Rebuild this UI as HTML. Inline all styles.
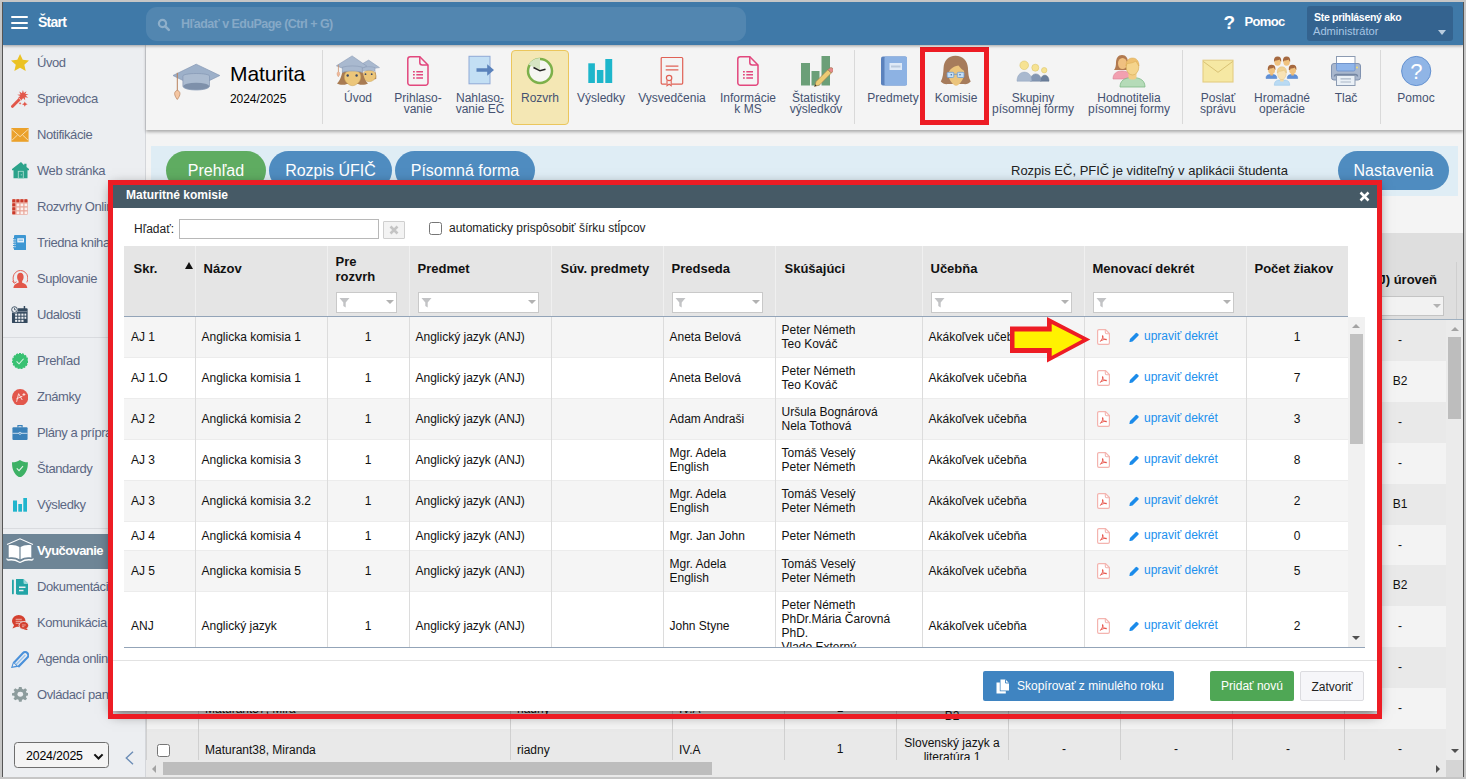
<!DOCTYPE html>
<html lang="sk">
<head>
<meta charset="utf-8">
<title>EduPage – Maturitné komisie</title>
<style>
*{box-sizing:border-box;margin:0;padding:0}
html,body{width:1466px;height:779px;overflow:hidden}
body{background:#c6c6c6;font-family:"Liberation Sans",Arial,sans-serif;font-size:12px;color:#000;position:relative}
.abs{position:absolute}
#frame{position:absolute;left:2px;top:2px;width:1462px;height:775px;border-left:1px solid #555;border-right:1px solid #555;background:#f4f4f4;overflow:hidden}
/* everything inside #frame uses page coords minus (3,2) -> use wrapper shifting */
#page{position:absolute;left:-3px;top:-2px;width:1466px;height:779px}
/* ---------- top bar ---------- */
#topbar{left:3px;top:2px;width:1460px;height:43px;background:#3f79a8;box-shadow:0 1px 3px rgba(0,0,0,.35);z-index:5}
#burger div{position:absolute;left:11px;width:17px;height:2px;background:#fff;border-radius:1px}
#start{left:38px;top:14px;color:#fff;font-size:14px;font-weight:bold;letter-spacing:-.75px;line-height:16px}
#search{left:146px;top:7px;width:600px;height:34px;border-radius:11px;background:#5286b0}
#search span{position:absolute;left:35px;top:10px;font-size:12.5px;font-weight:bold;color:#86a9c7;letter-spacing:-.53px;line-height:15px;white-space:nowrap}
#help{left:1244.500px;top:14px;color:#fff;font-size:13px;font-weight:bold;letter-spacing:-.65px}
#helpq{left:1223.500px;top:11.500px;color:#fff;font-size:19px;line-height:22px;font-weight:bold}
#user{left:1307px;top:6px;width:146px;height:35px;background:#34638f;border-radius:3px}
#user b{position:absolute;left:7px;top:4.500px;color:#fff;font-size:10.5px;letter-spacing:-.3px;white-space:nowrap}
#user span{position:absolute;left:6px;top:18.500px;color:#a8c6e4;font-size:11.100px;white-space:nowrap}
#user i{position:absolute;right:7.500px;top:24px;border:4px solid transparent;border-top:5px solid #b9cde0;border-bottom:0}
/* ---------- sidebar ---------- */
#side{left:3px;top:45px;width:143px;height:732px;background:#eceef1;border-right:1px solid #d4d6da;overflow:hidden}
.si{position:absolute;left:0;width:143px;height:36px}
.si span{position:absolute;left:34px;top:10px;font-size:13px;letter-spacing:-.43px;color:#5b6783;white-space:nowrap;line-height:16px}
.si svg{position:absolute}
.sl{position:absolute;left:0;width:143px;height:1px;background:#d9dbdf}
.si.sel{background:#6e8596}
.si.sel span{color:#fff;font-weight:bold;left:34px;top:9.500px;letter-spacing:-.6px;font-size:13px}
#yearsel{position:absolute;left:11px;top:697px;width:95px;height:26px;border:1px solid #6e6e6e;border-radius:3.500px;background:#f4f4f4}
#yearsel span{position:absolute;left:11px;top:4.500px;font-size:12.300px;letter-spacing:-.15px;line-height:16px;color:#000}
#yearsel svg{position:absolute;right:4.500px;top:9.500px}
#collapse{position:absolute;left:121.500px;top:705.500px}
/* ---------- toolbar ---------- */
#tool{left:146px;top:45px;width:1317px;height:85px;background:#f4f4f4;box-shadow:0 2px 3px rgba(0,0,0,.3);z-index:3}
.ti{position:absolute;text-align:center;font-size:12px;line-height:11px;color:#455271;white-space:nowrap}
.tsep{position:absolute;top:50px;width:1px;height:74px;background:#d9d9d9}
.tab{position:absolute;top:151px;height:39px;border-radius:20px;color:#fff;font-size:16px;line-height:39px;text-align:center;white-space:nowrap}
.bc{height:41px;line-height:41px;text-align:center;font-size:12px;color:#111;white-space:nowrap}
.bl{height:41px;line-height:43px;font-size:12px;color:#111;white-space:nowrap}
.cb{width:13px;height:13px;border:1px solid #767676;border-radius:2.5px;background:#fff}
.dd{border:4px solid transparent;border-top:4px solid #b2b2b2;border-bottom:0}
#modal{left:113px;top:185px;width:1264px;height:526px;background:#fff;z-index:10;box-shadow:0 2px 12px 1px rgba(0,0,0,.6)}
.mh{font-size:13px;font-weight:bold;line-height:15px;color:#111;white-space:nowrap}
.fb{height:21px;background:#fff;border:1px solid #c9c9c9}
.fb svg{position:absolute;left:2.200px;top:3.800px}
.fb .dd{position:absolute;right:2.400px;top:7.300px}
.mr{position:absolute;left:0;width:1224px;border-bottom:1px solid #ececec}
.mc{position:absolute;top:0;height:100%;display:flex;align-items:center;padding-left:6px;font-size:12px;line-height:14px;color:#111;white-space:nowrap}
.mc.ctr{justify-content:center;padding-left:0}
.mc a{color:#2090ee;position:absolute;left:60px;top:50%;margin-top:-8.500px}
.mc .pdf{position:absolute;left:12.500px;top:50%;margin-top:-8px}
.mc .pen{position:absolute;left:44.5px;top:50%;margin-top:-5.5px}
.btn{height:30px;line-height:30px;font-size:12px;text-align:center;border-radius:2px;white-space:nowrap}
</style>
</head>
<body>
<div id="frame"><div id="page">

<!-- top bar -->
<div id="topbar" class="abs"></div>
<div class="abs" style="left:0;top:0;z-index:6">
  <div id="burger"><div style="top:16px"></div><div style="top:21.5px"></div><div style="top:27px"></div></div>
  <div id="start" class="abs">Štart</div>
  <div id="search" class="abs">
    <svg class="abs" style="left:11px;top:11px" width="14" height="14" viewBox="0 0 14 14"><circle cx="5.500" cy="5.500" r="3.600" fill="none" stroke="#8eafca" stroke-width="2.200"/><path d="M8.300 8.300l3.500 3.500" stroke="#8eafca" stroke-width="2.600" stroke-linecap="round"/></svg>
    <span>Hľadať v EduPage (Ctrl + G)</span>
  </div>
  <div id="helpq" class="abs">?</div>
  <div id="help" class="abs">Pomoc</div>
  <div id="user" class="abs"><b>Ste prihlásený ako</b><span>Administrátor</span><i></i></div>
</div>

<!-- sidebar -->
<div id="side" class="abs">
<div class="si" style="top:-0.5px"><svg viewBox="1.30 1.50 19.40 18.40" preserveAspectRatio="none" style="left:7.9px;top:9.7px;width:18.1px;height:17.0px"><path d="M11 1.500l2.900 6.300 6.800.700-5.100 4.600 1.500 6.800L11 16.400 4.900 19.900l1.500-6.800L1.300 8.500l6.800-.700z" fill="#ebc223"/></svg><span>Úvod</span></div>
<div class="si" style="top:35.5px"><svg viewBox="0.90 0.00 18.60 20.10" preserveAspectRatio="none" style="left:8.2px;top:9.8px;width:17.6px;height:17.8px"><path d="M2.500 18.500L11.500 8.800" stroke="#e2574a" stroke-width="3.200" stroke-linecap="round" fill="none"/><path d="M9.300 9.200l2 1.900" stroke="#f6c8c2" stroke-width="1" fill="none"/><path d="M13.500 0l1 3.300 2.800-2-1.300 3.200 3.500.2-3.100 1.600 2.600 2.400-3.500-.500.400 3.500-2.300-2.700-1.900 3-.2-3.500-3.400.900 2.500-2.500-3.100-1.600 3.500-.300-1.400-3.200 2.900 1.900z" fill="#e2574a"/><path d="M15.500 13l.900 2.100 2.100.900-2.100.900-.900 2.100-.900-2.100-2.100-.900 2.100-.900z" fill="#e2574a"/><path d="M10.500 13.500l.500 1.100 1.100.500-1.100.500-.500 1.100-.500-1.100-1.100-.500 1.100-.500z" fill="#e2574a"/></svg><span>Sprievodca</span></div>
<div class="si" style="top:71.5px"><svg viewBox="-0.60 -0.60 20.20 15.20" preserveAspectRatio="none" style="left:7.9px;top:11.4px;width:18.1px;height:13.7px"><rect x="0" y="0" width="19" height="14" fill="#eba12b"/><path d="M0 .500l9.500 8.500L19 .500M0 13.500l6.800-6.500M19 13.500l-6.800-6.500" fill="none" stroke="#f9e3bb" stroke-width="1"/><path d="M0 0h19M0 14h19" stroke="#eba12b" stroke-width="1.200"/></svg><span>Notifikácie</span></div>
<div class="si" style="top:107.5px"><svg viewBox="0.00 0.00 17.00 17.95" preserveAspectRatio="none" style="left:8.5px;top:9.8px;width:17.0px;height:16.7px"><path d="M9 0L0 7.500V9h1.500v8.500h14V9H17V7.500L14.500 5.400V2h-2.300v1.500z" fill="#2ba28a"/><rect x="6.300" y="10" width="5" height="7.500" fill="#2ba28a" stroke="#a9dccf" stroke-width=".9"/><path d="M9.300 13v1.500" stroke="#a9dccf" stroke-width=".8"/></svg><span>Web stránka</span></div>
<div class="si" style="top:143.5px"><svg viewBox="0.00 0.00 16.00 16.00" preserveAspectRatio="none" style="left:9.2px;top:10.7px;width:15.8px;height:15.7px"><rect x="0" y="0" width="16" height="16" rx="1" fill="#e9a79b"/><g fill="#c93a2b"><rect x=".300" y=".300" width="3" height="3" rx=".600"/><rect x="4.400" y=".300" width="3" height="3" rx=".600"/><rect x="8.500" y=".300" width="3" height="3" rx=".600"/><rect x="12.600" y=".300" width="3" height="3" rx=".600"/><rect x=".300" y="4.400" width="3" height="3" rx=".600"/><rect x=".300" y="8.500" width="3" height="3" rx=".600"/><rect x=".300" y="12.600" width="3" height="3" rx=".600"/></g><g fill="#fbf1ef"><rect x="4.700" y="4.700" width="2.700" height="2.700"/><rect x="8.700" y="4.700" width="2.700" height="2.700"/><rect x="12.700" y="4.700" width="2.700" height="2.700"/><rect x="4.700" y="8.700" width="2.700" height="2.700"/><rect x="8.700" y="8.700" width="2.700" height="2.700"/><rect x="12.700" y="8.700" width="2.700" height="2.700"/><rect x="4.700" y="12.700" width="2.700" height="2.700"/><rect x="8.700" y="12.700" width="2.700" height="2.700"/><rect x="12.700" y="12.700" width="2.700" height="2.700"/></g></svg><span>Rozvrhy Online</span></div>
<div class="si" style="top:179.5px"><svg viewBox="0.00 0.00 13.00 15.50" preserveAspectRatio="none" style="left:10.1px;top:10.6px;width:13.0px;height:15.4px"><rect x="1" y="0" width="12" height="15.500" rx="1" fill="#3d97d3"/><rect x="4.300" y="3.300" width="6.700" height="4.200" fill="#eaf3fa"/><rect x="5.500" y="4.500" width="4.500" height="1.600" fill="#8fc1e6"/><g fill="#3d97d3"><rect x="0" y="3.200" width="2" height="1"/><rect x="0" y="5.500" width="2" height="1"/><rect x="0" y="7.800" width="2" height="1"/><rect x="0" y="10.100" width="2" height="1"/><rect x="0" y="12.400" width="2" height="1"/></g><g fill="#eceef1"><rect x="1.500" y="4.200" width="1" height="1.300"/><rect x="1.500" y="6.500" width="1" height="1.300"/><rect x="1.500" y="8.800" width="1" height="1.300"/><rect x="1.500" y="11.100" width="1" height="1.300"/></g></svg><span>Triedna kniha</span></div>
<div class="si" style="top:215.5px"><svg viewBox="-0.45 0.60 16.75 17.40" preserveAspectRatio="none" style="left:8.9px;top:9.4px;width:16.3px;height:18.1px"><path d="M1.700 12.500A7.600 7.600 0 1 1 14.800 12.500" fill="none" stroke="#e2574a" stroke-width=".9"/><path d="M0 11l1.700 2.300 2.600-1.400" fill="none" stroke="#e2574a" stroke-width=".9"/><path d="M8.200 3.300c2.200 0 3.300 1.700 3.300 4 0 1.500-.600 2.900-1.500 3.800v1.700c2 .700 5 1.300 5.300 5.200H1c.300-3.900 3.300-4.500 5.300-5.200v-1.700c-.900-.900-1.500-2.300-1.500-3.800 0-2.300 1.100-4 3.400-4z" fill="#e2574a"/></svg><span>Suplovanie</span></div>
<div class="si" style="top:251.5px"><svg viewBox="0.00 0.00 17.40 17.20" preserveAspectRatio="none" style="left:8.2px;top:9.3px;width:17.0px;height:17.2px"><rect x="1" y="2.200" width="16" height="15" rx="1" fill="#34495e"/><rect x="13" y="0" width="1.500" height="3.500" fill="#34495e"/><path d="M1 5.600h16" stroke="#8b98a6" stroke-width=".8"/><g fill="#eceef1"><rect x="4.200" y="7.600" width="2.200" height="2.100"/><rect x="7.400" y="7.600" width="2.200" height="2.100"/><rect x="10.600" y="7.600" width="2.200" height="2.100"/><rect x="13.800" y="7.600" width="1.800" height="2.100"/><rect x="4.200" y="10.700" width="2.200" height="2.100"/><rect x="7.400" y="10.700" width="2.200" height="2.100"/><rect x="10.600" y="10.700" width="2.200" height="2.100"/><rect x="13.800" y="10.700" width="1.800" height="2.100"/><rect x="4.200" y="13.800" width="2.200" height="2.100"/><rect x="7.400" y="13.800" width="2.200" height="2.100"/><rect x="10.600" y="13.800" width="2.200" height="2.100"/></g><circle cx="3.600" cy="3.600" r="3.600" fill="#eceef1"/><circle cx="3.600" cy="3.600" r="2.900" fill="#eceef1" stroke="#34495e" stroke-width=".9"/><path d="M3.600 1.800v2h1.500" fill="none" stroke="#34495e" stroke-width=".8"/></svg><span>Udalosti</span></div>
<div class="si" style="top:297.5px"><svg viewBox="-0.00 -0.00 16.00 16.00" preserveAspectRatio="none" style="left:8.9px;top:10.3px;width:16.3px;height:16.1px"><circle cx="8" cy="8" r="7.300" fill="#38c172" stroke="#38c172" stroke-width="1.400" stroke-dasharray="2 1"/><path d="M4.500 8.300l2.400 2.400 4.500-5" fill="none" stroke="#d9f5e5" stroke-width="1"/></svg><span>Prehľad</span></div>
<div class="si" style="top:333.5px"><svg viewBox="0.00 0.00 16.00 16.00" preserveAspectRatio="none" style="left:8.9px;top:10.1px;width:16.3px;height:16.7px"><circle cx="8" cy="8" r="8" fill="#e2574c"/><path d="M4.500 12.300l2-7.800 3.500 6M4.300 9.500l6-2.700M10.300 5.300h2.800M11.700 3.900v2.800" fill="none" stroke="#fbe4e1" stroke-width=".9"/></svg><span>Známky</span></div>
<div class="si" style="top:369.5px"><svg viewBox="-0.45 0.00 16.90 15.00" preserveAspectRatio="none" style="left:9.0px;top:10.8px;width:16.0px;height:15.0px"><rect x="0" y="2.200" width="16" height="12.800" rx="1" fill="#3a81b9"/><path d="M5.800 2.500V.600h4.400V2.500" fill="none" stroke="#3a81b9" stroke-width="1.200"/><path d="M0 8.300h6.800M9.200 8.300H16" stroke="#dbe8f3" stroke-width=".9"/><ellipse cx="8" cy="8.300" rx="1.400" ry="1" fill="none" stroke="#dbe8f3" stroke-width=".8"/></svg><span>Plány a prípravy</span></div>
<div class="si" style="top:405.5px"><svg viewBox="0.00 0.00 16.00 17.70" preserveAspectRatio="none" style="left:9.0px;top:9.3px;width:15.9px;height:17.7px"><path d="M8 0c2.300 1.500 5 2.300 8 2.300 0 7.200-1.800 12-8 15.400C1.800 14.300 0 9.500 0 2.300c3 0 5.700-.800 8-2.300z" fill="#3db165"/><path d="M4.800 8.300l2.300 2.300 4-4.400" fill="none" stroke="#e4f5ea" stroke-width="1.100"/></svg><span>Štandardy</span></div>
<div class="si" style="top:441.5px"><svg viewBox="0.00 0.00 14.00 13.70" preserveAspectRatio="none" style="left:9.9px;top:11.5px;width:14.0px;height:13.7px"><rect x="0" y="2.500" width="4" height="11.200" fill="#20b5cd"/><rect x="5.300" y="6" width="3.700" height="7.700" fill="#20b5cd"/><rect x="10.300" y="0" width="3.700" height="13.700" fill="#20b5cd"/></svg><span>Výsledky</span></div>
<div class="sl" style="top:292px"></div><div class="sl" style="top:483px"></div>
<div class="si sel" style="top:488.500px;height:35px"><svg viewBox="0 0 28 25" style="left:3px;top:4.500px;width:28px;height:25px"><path d="M1 6.500L14 .800l13 5.700" fill="none" stroke="#fff" stroke-width="1.100"/><path d="M13.400 9C10.600 7 6 6.500 2.700 7.300v12.300c3.300-.8 7.900-.3 10.700 1.700z" fill="#fff"/><path d="M14.600 9c2.800-2 7.400-2.500 10.700-1.700v12.300c-3.300-.8-7.900-.3-10.700 1.700z" fill="#fff"/><path d="M.800 20.500c0 0 .2 1.500 1.200 1.500 4-.6 8 0 10.500 1.800.9.600 2.100.6 3 0 2.500-1.800 6.500-2.400 10.500-1.800 1 0 1.200-1.500 1.200-1.500" fill="none" stroke="#fff" stroke-width="1.300"/></svg><span>Vyučovanie</span></div>
<div class="si" style="top:523.5px"><svg viewBox="0.00 0.00 16.50 16.00" preserveAspectRatio="none" style="left:8.5px;top:10.3px;width:16.5px;height:15.8px"><rect x="0" y=".500" width="1.800" height="15" rx=".900" fill="#22a4a6"/><path d="M4 0h7.500l5 5v9.500a1.500 1.500 0 0 1-1.500 1.500H5.500A1.500 1.500 0 0 1 4 14.500z" fill="#22a4a6"/><path d="M11.500 0v3.800a1.200 1.200 0 0 0 1.200 1.200h3.800z" fill="#9bd9da"/><path d="M7 8.300h6.500M7 11.700h4.500" stroke="#eceef1" stroke-width="1.500"/></svg><span>Dokumentácia</span></div>
<div class="si" style="top:559.5px"><svg viewBox="0.00 0.00 17.75 15.60" preserveAspectRatio="none" style="left:8.5px;top:10.4px;width:17.1px;height:15.6px"><ellipse cx="7" cy="6" rx="7" ry="6" fill="#d4402f"/><path d="M2.500 9.500L.500 13.500l5-2z" fill="#d4402f"/><path d="M3.800 4.300h6.400M3.800 6.300h6.400M3.800 8.300h4" stroke="#f3d2cd" stroke-width=".8"/><ellipse cx="12.300" cy="10.500" rx="5" ry="4" fill="#d4402f" stroke="#eceef1" stroke-width=".9"/><path d="M14.500 13l2.600 2.600-4.800-1.300z" fill="#d4402f"/><path d="M10.300 10h4M10.300 11.700h2.500" stroke="#f3d2cd" stroke-width=".7"/></svg><span>Komunikácia</span></div>
<div class="si" style="top:595.5px"><svg viewBox="0.00 0.28 19.22 17.22" preserveAspectRatio="none" style="left:8.0px;top:10.2px;width:18.3px;height:17.1px"><path d="M3.300 11.800L12.600 2.300a3.200 3.200 0 0 1 4.500 0l.100.100a3.200 3.200 0 0 1 0 4.500L7.600 16.300" fill="none" stroke="#4b91da" stroke-width="2.200" stroke-linejoin="round"/><path d="M5.400 14L15 4.300" fill="none" stroke="#9cc5ef" stroke-width="1.500"/><path d="M0 17.500l2.300-6.700 5.800 5.300z" fill="#4b91da"/><path d="M1.700 15.900l1.200-3.200 2.700 2.400z" fill="#eceef1"/></svg><span>Agenda online</span></div>
<div class="si" style="top:631.5px"><svg viewBox="0.40 0.00 21.20 21.20" preserveAspectRatio="none" style="left:8.5px;top:10.8px;width:16.6px;height:14.7px"><path d="M9.300 0h3.400l.5 2.700 1.800.8 2.300-1.600 2.400 2.400-1.600 2.300.8 1.800 2.700.5v3.400l-2.700.5-.8 1.800 1.600 2.300-2.400 2.400-2.300-1.600-1.800.8-.5 2.700H9.300l-.5-2.700-1.800-.8-2.300 1.600-2.400-2.400 1.600-2.300-.8-1.800-2.700-.5V8.900l2.700-.5.800-1.800L2.300 4.300l2.400-2.400L7 3.500l1.800-.8z" fill="#8d9c9d"/><circle cx="11" cy="10.600" r="3.600" fill="#eceef1"/></svg><span>Ovládací panel</span></div>
<div id="yearsel"><span>2024/2025</span><svg viewBox="0 0 12 8" width="11" height="7.300"><path d="M1.500 1.500l4.500 4.500 4.500-4.500" fill="none" stroke="#111" stroke-width="2.300"/></svg></div>
<svg id="collapse" viewBox="0 0 9 14" width="9" height="14"><path d="M8 .800L1.300 7l6.700 6.200" fill="none" stroke="#6c8db6" stroke-width="1.400"/></svg>
</div>

<!-- toolbar -->
<div id="tool" class="abs"></div>
<div class="abs" style="left:0;top:0;z-index:4">
<svg class="abs" style="left:172px;top:63px" width="49" height="38" viewBox="0 0 49 38"><path d="M24.200 1.200L1 12.500l23.200 11.500 23.600-11.500z" fill="#9db0c9" stroke="#8497b3" stroke-width=".7"/><path d="M10.900 13c0-1.400 6-2.500 13.300-2.500s13.300 1.100 13.300 2.500v10.200c0 2.100-6 3.800-13.300 3.800s-13.300-1.700-13.300-3.800z" fill="#abbbd0" stroke="#8497b3" stroke-width=".7"/><ellipse cx="24.200" cy="23.300" rx="12.900" ry="3.500" fill="#7e90aa"/><path d="M5.300 9.800v18" stroke="#b8805a" stroke-width="1"/><path d="M5.300 27.300c-3.300 1.200-3.800 4.300 0 9.200 3.800-4.900 3.300-8 0-9.200z" fill="#f4c6a2" stroke="#b8805a" stroke-width=".7"/></svg>
<div class="abs" style="left:230px;top:61.800px;font-size:21px;line-height:24px;letter-spacing:-.1px;color:#000">Maturita</div>
<div class="abs" style="left:230px;top:92px;font-size:12px;line-height:14px;letter-spacing:-.05px;color:#000">2024/2025</div>
<div class="tsep" style="left:322px"></div>
<div class="tsep" style="left:854px"></div>
<div class="tsep" style="left:1182px"></div>
<div class="tsep" style="left:1380px"></div>
<div class="abs" style="left:511px;top:50px;width:58px;height:75px;background:#f4e7b4;border:1px solid #ebc65c;border-radius:4px"></div>
<div class="ti" style="left:308px;top:93px;width:100px">Úvod</div>
<div class="ti" style="left:368px;top:93px;width:100px">Prihlaso-<br>vanie</div>
<div class="ti" style="left:430px;top:93px;width:100px">Nahlaso-<br>vanie EČ</div>
<div class="ti" style="left:490px;top:93px;width:100px">Rozvrh</div>
<div class="ti" style="left:551px;top:93px;width:100px">Výsledky</div>
<div class="ti" style="left:622px;top:93px;width:100px">Vysvedčenia</div>
<div class="ti" style="left:698px;top:93px;width:100px">Informácie<br>k MS</div>
<div class="ti" style="left:766px;top:93px;width:100px">Štatistiky<br>výsledkov</div>
<div class="ti" style="left:843px;top:93px;width:100px">Predmety</div>
<div class="ti" style="left:906px;top:93px;width:100px">Komisie</div>
<div class="ti" style="left:983px;top:93px;width:100px">Skupiny<br>písomnej formy</div>
<div class="ti" style="left:1079px;top:93px;width:100px">Hodnotitelia<br>písomnej formy</div>
<div class="ti" style="left:1168px;top:93px;width:100px">Poslať<br>správu</div>
<div class="ti" style="left:1232px;top:93px;width:100px">Hromadné<br>operácie</div>
<div class="ti" style="left:1296px;top:93px;width:100px">Tlač</div>
<div class="ti" style="left:1366px;top:93px;width:100px">Pomoc</div>
<svg class="abs" style="left:335px;top:55px" width="46" height="32" viewBox="0 0 46 32"><g><path d="M40 16c1 2 1.500 5 1.200 8l-3 .5z" fill="#a87b52"/><path d="M27.600 21c0-3.500 2.800-5.800 6.600-5.800s6.600 2.300 6.600 5.800c0 3-3.500 5.600-6.600 5.600s-6.600-2.600-6.600-5.600z" fill="#ecc67a" stroke="#c9a055" stroke-width=".5"/><path d="M33.600 5.100L22.500 11.500l5 1.800h12.500l4.500-.7z" fill="#a9b9cf" stroke="#8a9bb5" stroke-width=".5"/><path d="M27.500 12.600c3.500-1.200 9-1.200 12.500 0v3.700c-3.500-1.300-9-1.300-12.500 0z" fill="#a9b9cf" stroke="#8a9bb5" stroke-width=".5"/><circle cx="30.500" cy="19.200" r=".9" fill="#3d4a66"/><circle cx="36.700" cy="19.200" r=".9" fill="#3d4a66"/></g><g><path d="M8 15c-1.500 5-2.500 10.500-6 13.500 2.500 1.700 7.500 1.700 10 .5l11 0c2.500 1.200 7.500 1.200 10-.5-3.500-3-4.500-8.500-6-13.500z" fill="#a87b52"/><path d="M9.300 22c0-4.500 3.600-7.200 8.200-7.200s8.300 2.700 8.300 7.200c0 4.300-4.500 8.700-8.300 8.700S9.300 26.300 9.300 22z" fill="#ecc67a" stroke="#c9a055" stroke-width=".5"/><path d="M17.100 .900L1.400 10.800l6 2.400h19.900l4.500-2.100z" fill="#a9b9cf" stroke="#8a9bb5" stroke-width=".6"/><path d="M7.400 12.200c5-1.700 15-1.700 19.900 0v5.300c-5-2-15-2-19.900 0z" fill="#a9b9cf" stroke="#8a9bb5" stroke-width=".6"/><path d="M3.400 9.800v7" stroke="#c9906a" stroke-width=".8"/><path d="M3.400 16.400c-1.500 1-2 3-.1 5.400 2-2.400 1.600-4.400.1-5.400z" fill="#f2b899" stroke="#d09a78" stroke-width=".5"/><circle cx="12.700" cy="20.500" r="1.200" fill="#3d4a66"/><circle cx="21.600" cy="20.500" r="1.200" fill="#3d4a66"/></g></svg>
<svg class="abs" style="left:406px;top:55px" width="24" height="32" viewBox="0 0 24 32"><path d="M4.300 1.800h9.500l8.200 8.200v17.700a2.500 2.500 0 0 1-2.500 2.500H4.300a2.500 2.500 0 0 1-2.500-2.500V4.300a2.500 2.500 0 0 1 2.500-2.500z" fill="none" stroke="#e2477d" stroke-width="1.500"/><path d="M13.800 1.800V7.500a2.500 2.500 0 0 0 2.500 2.500h5.700" fill="none" stroke="#e2477d" stroke-width="1.500"/><g stroke="#e2477d" stroke-width="1.500"><path d="M10.300 16.800h6.700M10.300 19.800h6.700M10.300 22.900h6.700"/><path d="M7 16.800h1.800M7 19.800h1.800M7 22.900h1.800"/></g></svg>
<svg class="abs" style="left:736px;top:55px" width="24" height="32" viewBox="0 0 24 32"><path d="M4.300 1.800h9.500l8.200 8.200v17.700a2.500 2.500 0 0 1-2.500 2.500H4.300a2.500 2.500 0 0 1-2.500-2.500V4.300a2.500 2.500 0 0 1 2.500-2.500z" fill="none" stroke="#e2477d" stroke-width="1.500"/><path d="M13.800 1.800V7.500a2.500 2.500 0 0 0 2.500 2.500h5.700" fill="none" stroke="#e2477d" stroke-width="1.500"/><g stroke="#e2477d" stroke-width="1.500"><path d="M10.300 16.800h6.700M10.300 19.800h6.700M10.300 22.900h6.700"/><path d="M7 16.800h1.800M7 19.800h1.800M7 22.900h1.800"/></g></svg>
<svg class="abs" style="left:467.500px;top:55px" width="28" height="30" viewBox="0 0 28 30"><rect x="1" y="1.300" width="21" height="27.500" fill="#c3dff4" stroke="#8fa9d6" stroke-width="1"/><path d="M8.500 13.200h10.700V9.300L26 15l-6.800 5.700v-3.900H8.500z" fill="#5a82bb"/></svg>
<svg class="abs" style="left:525px;top:56px" width="30" height="30" viewBox="0 0 30 30"><circle cx="15" cy="15" r="12" fill="#f6f6f2" stroke="#7cb04a" stroke-width="2.500"/><path d="M15 15V2A13 13 0 0 0 3.700 8.500z" fill="#d6e5c3"/><path d="M8.500 11.500L15 14.800l5.500-1.600" fill="none" stroke="#222" stroke-width="1.500"/></svg>
<svg class="abs" style="left:587px;top:58px" width="26" height="26" viewBox="0 0 26 26"><rect x="1.300" y="5.300" width="6.600" height="19.700" fill="#1db6cb"/><rect x="9.900" y="12" width="6.500" height="13" fill="#1db6cb"/><rect x="18.300" y="1" width="6.900" height="24" fill="#1db6cb"/></svg>
<svg class="abs" style="left:660px;top:56px" width="24" height="31" viewBox="0 0 24 31"><path d="M6.500 28.100H2.200a1 1 0 0 1-1-1V2.500a1 1 0 0 1 1-1h19.500a1 1 0 0 1 1 1v24.600a1 1 0 0 1-1 1h-10" fill="none" stroke="#e06155" stroke-width="1.200"/><path d="M5.700 10.100h12.700M5.700 13.800h12.700" stroke="#e06155" stroke-width="1.200"/><circle cx="9.100" cy="22" r="2.700" fill="#f4f4f4" stroke="#e06155" stroke-width="1.200"/><path d="M7 24.300v5.400l2.100-1.500 2.100 1.500v-5.400" fill="none" stroke="#e06155" stroke-width="1.100"/></svg>
<svg class="abs" style="left:800px;top:55px" width="33" height="33" viewBox="0 0 33 33"><rect x="1" y="8" width="9" height="22.500" fill="#6b9f78"/><rect x="11.500" y="16" width="8" height="14.500" fill="#6b9f78"/><rect x="21.500" y="1" width="8.500" height="29.500" fill="#6b9f78"/><path d="M14.500 31.500l1.600-5L28 14.600l3.400 3.400L19.500 30z" fill="#edcb74" stroke="#9a7a4a" stroke-width=".6"/><path d="M28 14.600l1.300-1.300a2.400 2.400 0 0 1 3.400 3.400L31.400 18z" fill="#e58a8a" stroke="#8a6a3a" stroke-width=".5"/><path d="M14.500 31.500l.7-2.200 1.500 1.500z" fill="#333"/></svg>
<svg class="abs" style="left:880px;top:55px" width="28" height="32" viewBox="0 0 28 32"><rect x="1" y="1.500" width="26" height="29" rx="2" fill="#5b82bd"/><rect x="4.500" y="1.500" width="22.500" height="29" rx="1.500" fill="#8db2e3"/><rect x="9.500" y="8" width="12.500" height="7" fill="#dfeaf7"/><rect x="11" y="10.500" width="9.500" height="2" fill="#b9c9dd"/></svg>
<svg class="abs" style="left:940px;top:55px" width="32" height="32" viewBox="0 0 32 32"><path d="M15.500 .700C8 .700 4 6 3.600 12.500 3.300 18 3 23 .800 26.500c1.500 2 4.500 3 7.200 2.500l15.500 0c2.700.500 5.700-.500 7.200-2.500-2.200-3.500-2.500-8.500-2.800-14C27.500 6 23 .700 15.500 .700z" fill="#a67b5b"/><path d="M8 18c0-6 4-8.500 8.500-8.500s7.700 2.500 7.700 8.500c0 6-5 12.700-8.100 12.700S8 24 8 18z" fill="#ebc47c"/><path d="M7.300 23C7.800 15.500 12 11.500 18.500 10.500c1.800 2.500 4 4.500 6.500 6V8H7.300z" fill="#a67b5b"/><rect x="7.100" y="17.300" width="6.700" height="5.200" rx="1" fill="#c5dff6" stroke="#6c9bd0" stroke-width=".8"/><rect x="17.300" y="17.300" width="6.700" height="5.200" rx="1" fill="#c5dff6" stroke="#6c9bd0" stroke-width=".8"/><path d="M13.800 19.300h3.500" stroke="#6c9bd0" stroke-width=".8"/><circle cx="11.300" cy="19.800" r=".8" fill="#4a6a95"/><circle cx="20" cy="19.800" r=".8" fill="#4a6a95"/></svg>
<svg class="abs" style="left:1016px;top:59px" width="34" height="24" viewBox="0 0 34 24"><circle cx="28.200" cy="11.200" r="2.700" fill="#f6e292" stroke="#dcc66c" stroke-width=".6"/><path d="M24.500 22.200c0-3.600 1.700-6 4.300-6s4.200 2.400 4.200 6z" fill="#6b7f9b" stroke="#5d7089" stroke-width=".5"/><circle cx="19.300" cy="8.700" r="3.500" fill="#f6e292" stroke="#dcc66c" stroke-width=".6"/><path d="M14.300 22.200c0-4.400 2.200-7.300 5.500-7.300s5.400 2.900 5.400 7.300z" fill="#8497b3" stroke="#72859f" stroke-width=".5"/><circle cx="8.200" cy="6.300" r="4.300" fill="#f6e292" stroke="#dcc66c" stroke-width=".6"/><path d="M1 22.200c0-5.500 3-9.100 7.400-9.100s7.300 3.600 7.300 9.100z" fill="#a9b9cf" stroke="#93a5bf" stroke-width=".5"/></svg>
<svg class="abs" style="left:1112px;top:54px" width="34" height="34" viewBox="0 0 34 34"><path d="M10 1c-4 0-6 3.500-6 7.500 0 3-.5 5.500-2 7.500h16c-1.500-2-2-4.500-2-7.500C16 4.500 14 1 10 1z" fill="#b27a50"/><ellipse cx="10.500" cy="9.500" rx="4.500" ry="5.500" fill="#f0c080"/><path d="M1 25c0-5 3-8 9-8s9 3 9 8z" fill="#f2a0b0" stroke="#d98093" stroke-width=".6"/><path d="M8 33c0-6 4-9.500 12.500-9.500S33 27 33 33z" fill="#b5dbb8" stroke="#7fb987" stroke-width=".8"/><path d="M16.500 18h8v6c-1.500 2-6.500 2-8 0z" fill="#f2cc84"/><ellipse cx="20.500" cy="13" rx="6.300" ry="8" fill="#f5d48c" stroke="#d9b25e" stroke-width=".7"/><path d="M14 12c0-5 2.500-8 6.500-8s6.500 3 6.500 8c-1.500-2-2.500-3.500-3-5-2 1.500-6 2.500-8.500 2.500-.7.700-1.200 1.500-1.500 2.500z" fill="#eec070" stroke="#d9a850" stroke-width=".5"/></svg>
<svg class="abs" style="left:1202px;top:59px" width="33" height="24" viewBox="0 0 33 24"><rect x="1" y="1.200" width="30" height="21.800" fill="#f6e8a3" stroke="#e4cd82" stroke-width="1.100"/><path d="M1.300 2.500l14.700 10.800L30.700 2.500" fill="none" stroke="#d9c274" stroke-width="1"/></svg>
<svg class="abs" style="left:1265px;top:56px" width="34" height="31" viewBox="0 0 34 31"><ellipse cx="12.6" cy="5.5" rx="3.3" ry="4.2" fill="#f0c27f"/><path d="M9.0 5.8c-.4-3.300 1-5.200 3.6-5.200s4.0 1.900 3.6 5.200c-.9-.6-1.400-1.500-1.600-2.400-1.200.8-2.700 1-4 1-.5.300-.9.800--0.0 1.400z" fill="#a5683f"/><ellipse cx="21.6" cy="5.5" rx="3.3" ry="4.2" fill="#f0c27f"/><path d="M18.0 5.8c-.4-3.300 1-5.200 3.6-5.200s4.0 1.900 3.6 5.200c-.9-.6-1.400-1.500-1.600-2.400-1.200.8-2.700 1-4 1-.5.300-.9.800--0.0 1.400z" fill="#a5683f"/><path d="M1 22.5c0-3.9 2.4-3.9 5.4-3.9s5.4 0 5.4 3.9z" fill="#5f90d8" stroke="#4a7cc6" stroke-width=".5"/><path d="M22.3 22.5c0-3.9 2.3-3.9 5.2-3.9s5.2 0 5.2 3.9z" fill="#5f90d8" stroke="#4a7cc6" stroke-width=".5"/><rect x="5.300" y="16.500" width="2.600" height="3" fill="#e8b673"/><rect x="26.300" y="16.500" width="2.600" height="3" fill="#e8b673"/><ellipse cx="6.6" cy="13.7" rx="3.5" ry="4.4" fill="#f0c27f"/><path d="M2.8 14.0c-.4-3.300 1-5.200 3.8-5.200s4.2 1.900 3.8 5.200c-.9-.6-1.400-1.500-1.600-2.400-1.200.8-2.700 1-4 1-.5.300-.9.800-0.4 1.400z" fill="#a5683f"/><ellipse cx="27.6" cy="13.7" rx="3.5" ry="4.4" fill="#f0c27f"/><path d="M23.8 14.0c-.4-3.300 1-5.200 3.8-5.200s4.2 1.900 3.8 5.200c-.9-.6-1.400-1.500-1.600-2.400-1.200.8-2.700 1-4 1-.5.300-.9.800-0.4 1.400z" fill="#a5683f"/><path d="M9.3 29.3c0-5.3 3.4-5.3 7.7-5.3s7.7 0 7.7 5.3z" fill="#b9daf3" stroke="#8fc0e6" stroke-width=".5"/><rect x="15.200" y="22" width="3.400" height="3.500" fill="#f3d9a6"/><ellipse cx="16.900" cy="17.600" rx="4.300" ry="6" fill="#f8e2b5" stroke="#e3c48a" stroke-width=".5"/><path d="M12.400 17c-.5-4 1.200-6.200 4.500-6.200s5 2.200 4.500 6.200c-1-.9-1.700-2-2-3.100-1.500 1-3.500 1.400-5.200 1.400-.8.500-1.400 1-1.800 1.700z" fill="#f0d295" stroke="#dcb872" stroke-width=".4"/></svg>
<svg class="abs" style="left:1330px;top:55px" width="32" height="32" viewBox="0 0 32 32"><rect x="6.500" y="1.500" width="18.500" height="10" fill="#fff" stroke="#8c9bb2" stroke-width="1"/><rect x="1.500" y="8.500" width="29" height="16.500" rx="2.500" fill="#a9b7cd" stroke="#8092b0" stroke-width="1"/><path d="M6.500 8.500h18.500v6a1.500 1.500 0 0 1-1.500 1.500h-15.500a1.500 1.500 0 0 1-1.500-1.500z" fill="#8fb5ea" stroke="#6f93cc" stroke-width=".9"/><circle cx="27" cy="12.500" r="1" fill="#f5df6e"/><path d="M4.500 21.500c0-1.500 1-2 2.500-2h18c1.500 0 2.500.500 2.500 2" fill="none" stroke="#7486a3" stroke-width="1.400"/><rect x="6.500" y="20.500" width="18.500" height="10" fill="#eaf0f6" stroke="#8c9bb2" stroke-width="1"/><path d="M10.500 23.800h10.500M10.500 27h10.500" stroke="#aab6c6" stroke-width="1.200"/></svg>
<svg class="abs" style="left:1400px;top:55px" width="32" height="32" viewBox="0 0 32 32"><circle cx="16.200" cy="16" r="14.600" fill="#90b5e6" stroke="#6491d0" stroke-width="1"/><text x="16.300" y="24.300" text-anchor="middle" font-family="Liberation Sans,Arial,sans-serif" font-size="22" fill="#fff">?</text></svg>
<div class="abs" style="left:920px;top:47px;width:69px;height:78px;border:5px solid #ed1c24;z-index:4"></div>
</div>

<!-- tabs + back grid -->
<div class="abs" style="left:0;top:0;z-index:1">
<div class="abs" style="left:151px;top:146px;width:1307px;height:50px;background:#dfedf5"></div>
<div class="tab" style="left:166px;width:100px;background:#5fac61">Prehľad</div>
<div class="tab" style="left:269px;width:123px;background:#4f8cc0">Rozpis ÚFIČ</div>
<div class="tab" style="left:395px;width:140px;background:#4f8cc0">Písomná forma</div>
<div class="abs" style="left:1011px;top:163px;font-size:13px;line-height:16px;color:#222;white-space:nowrap">Rozpis EČ, PFIČ je viditeľný v aplikácii študenta</div>
<div class="tab" style="left:1338px;width:111px;background:#4f8cc0">Nastavenia</div>
<div class="abs" style="left:146px;top:233px;width:1317px;height:87px;background:#dedede;border-bottom:1px solid #9fb0c0;z-index:2"></div>
<div class="abs" style="left:1377px;top:272px;z-index:2;font-size:13px;font-weight:bold;line-height:16px;color:#111;white-space:nowrap;width:60px;overflow:hidden;direction:rtl"><span style="direction:ltr;unicode-bidi:bidi-override">(ANJ) úroveň</span></div>
<div class="abs" style="left:1360px;top:296px;z-index:2;width:84px;height:20px;background:#f2f2f2;border:1px solid #c4c4c4"></div><i class="abs dd" style="left:1433px;top:304px;z-index:2"></i>
<div class="abs" style="left:1456px;top:262px;width:1px;height:57px;background:#cfcfcf;z-index:2"></div>
<div class="abs" style="left:146px;top:320.0px;width:1300px;height:41px;background:#e9e9e9"></div>
<div class="abs bc" style="left:1344px;top:320.0px;width:112px">-</div>
<div class="abs" style="left:146px;top:360.9px;width:1300px;height:41px;background:#f3f3f3"></div>
<div class="abs bc" style="left:1344px;top:360.9px;width:112px">B2</div>
<div class="abs" style="left:146px;top:401.8px;width:1300px;height:41px;background:#e9e9e9"></div>
<div class="abs bc" style="left:1344px;top:401.8px;width:112px">-</div>
<div class="abs" style="left:146px;top:442.7px;width:1300px;height:41px;background:#f3f3f3"></div>
<div class="abs bc" style="left:1344px;top:442.7px;width:112px">-</div>
<div class="abs" style="left:146px;top:483.6px;width:1300px;height:41px;background:#e9e9e9"></div>
<div class="abs bc" style="left:1344px;top:483.6px;width:112px">B1</div>
<div class="abs" style="left:146px;top:524.5px;width:1300px;height:41px;background:#f3f3f3"></div>
<div class="abs bc" style="left:1344px;top:524.5px;width:112px">-</div>
<div class="abs" style="left:146px;top:565.4px;width:1300px;height:41px;background:#e9e9e9"></div>
<div class="abs bc" style="left:1344px;top:565.4px;width:112px">B2</div>
<div class="abs" style="left:146px;top:606.3px;width:1300px;height:41px;background:#f3f3f3"></div>
<div class="abs bc" style="left:1344px;top:606.3px;width:112px">-</div>
<div class="abs" style="left:146px;top:647.2px;width:1300px;height:41px;background:#e9e9e9"></div>
<div class="abs bc" style="left:1344px;top:647.2px;width:112px">-</div>
<div class="abs" style="left:146px;top:688.1px;width:1300px;height:41px;background:#f3f3f3"></div>
<div class="abs bc" style="left:1344px;top:688.1px;width:112px">-</div>
<div class="abs" style="left:146px;top:729.0px;width:1300px;height:41px;background:#e9e9e9"></div>
<div class="abs bc" style="left:1344px;top:729.0px;width:112px">-</div>
<div class="abs" style="left:146px;top:320px;width:1px;height:440px;background:#d0d0d0"></div>
<div class="abs" style="left:198px;top:320px;width:1px;height:440px;background:#d0d0d0"></div>
<div class="abs" style="left:510px;top:320px;width:1px;height:440px;background:#d0d0d0"></div>
<div class="abs" style="left:672px;top:320px;width:1px;height:440px;background:#d0d0d0"></div>
<div class="abs" style="left:784px;top:320px;width:1px;height:440px;background:#d0d0d0"></div>
<div class="abs" style="left:896px;top:320px;width:1px;height:440px;background:#d0d0d0"></div>
<div class="abs" style="left:1008px;top:320px;width:1px;height:440px;background:#d0d0d0"></div>
<div class="abs" style="left:1120px;top:320px;width:1px;height:440px;background:#d0d0d0"></div>
<div class="abs" style="left:1232px;top:320px;width:1px;height:440px;background:#d0d0d0"></div>
<div class="abs" style="left:1344px;top:320px;width:1px;height:440px;background:#d0d0d0"></div>
<div class="abs bl" style="left:205px;top:688.1px">Maturant37, Mira</div><div class="abs bl" style="left:517px;top:688.1px">riadny</div><div class="abs bl" style="left:679px;top:688.1px">IV.A</div><div class="abs bc" style="left:784px;top:688.1px;width:112px">1</div>
<div class="abs bc" style="left:896px;top:688.1px;width:112px;line-height:14px;padding-top:6.500px">Anglický jazyk<br>B2</div>
<div class="abs bl" style="left:205px;top:729.0px">Maturant38, Miranda</div><div class="abs bl" style="left:517px;top:729.0px">riadny</div><div class="abs bl" style="left:679px;top:729.0px">IV.A</div><div class="abs bc" style="left:784px;top:729.0px;width:112px">1</div>
<div class="abs bc" style="left:896px;top:729.0px;width:112px;line-height:14px;padding-top:6.500px">Slovenský jazyk a<br>literatúra 1</div>
<div class="abs bc" style="left:1008px;top:729.0px;width:112px">-</div>
<div class="abs bc" style="left:1120px;top:729.0px;width:112px">-</div>
<div class="abs bc" style="left:1232px;top:729.0px;width:112px">-</div>
<div class="abs cb" style="left:157px;top:744px"></div>
<div class="abs" style="left:1446px;top:320px;width:17px;height:440px;background:#ebebeb"></div>
<div class="abs" style="left:1448px;top:337px;width:13px;height:82px;background:#bdbdbd"></div>
<i class="abs" style="left:1450.5px;top:327px;border:4px solid transparent;border-bottom:4px solid #a3a3a3;border-top:0"></i>
<i class="abs" style="left:1450.5px;top:749px;border:4px solid transparent;border-top:4px solid #505050;border-bottom:0"></i>
<div class="abs" style="left:146px;top:760px;width:1300px;height:17px;background:#e9e9e9"></div>
<div class="abs" style="left:1446px;top:760px;width:17px;height:17px;background:#d5d5d5"></div>
<div class="abs" style="left:163px;top:762px;width:549px;height:13px;background:#bdbdbd"></div>
<i class="abs" style="left:152px;top:765px;border:4px solid transparent;border-right:4px solid #a3a3a3;border-left:0"></i>
<i class="abs" style="left:1436px;top:765px;border:4px solid transparent;border-left:4px solid #505050;border-right:0"></i>
</div>
<!--MODAL-START-->
<div id="modal" class="abs">
<div class="abs" style="left:0;top:0;width:1264px;height:22.5px;background:#465a66"></div>
<div class="abs" style="left:13px;top:3px;color:#fff;font-weight:bold;font-size:12px;line-height:15px;white-space:nowrap">Maturitné komisie</div>
<svg class="abs" style="left:1245.5px;top:5.500px" width="11" height="11" viewBox="0 0 11 11"><path d="M1.500 1.500l8 8M9.500 1.500l-8 8" stroke="#fff" stroke-width="2.500"/></svg>
<div class="abs" style="left:21px;top:37px;font-size:12px;line-height:14px;color:#222;white-space:nowrap">Hľadať:</div>
<div class="abs" style="left:66px;top:34px;width:200px;height:20px;border:1px solid #b8b8b8;background:#fff"></div>
<div class="abs" style="left:269.500px;top:35.500px;width:22.500px;height:18px;border:1px solid #cfcfcf;background:#f3f3f3;border-radius:1px"></div>
<svg class="abs" style="left:276px;top:40px" width="10" height="10" viewBox="0 0 10 10"><path d="M1.500 1.500l7 7M8.500 1.500l-7 7" stroke="#c4c4c4" stroke-width="2.600"/></svg>
<div class="abs cb" style="left:316px;top:37px"></div>
<div class="abs" style="left:336px;top:36px;font-size:12px;line-height:14px;color:#222;white-space:nowrap">automaticky prispôsobiť šírku stĺpcov</div>
<div class="abs" style="left:11px;top:61px;width:1224px;height:71px;background:#e5e5e5;border-bottom:1px solid #93a4b8"></div>
<div class="abs mh" style="left:20.5px;top:76px">Skr.</div>
<div class="abs" style="left:82px;top:61px;width:1px;height:70px;background:#f0f0f0"></div>
<div class="abs mh" style="left:90.5px;top:76px">Názov</div>
<div class="abs" style="left:214px;top:61px;width:1px;height:70px;background:#f0f0f0"></div>
<div class="abs mh" style="left:222.5px;top:69px">Pre<br>rozvrh</div>
<div class="abs fb" style="left:223px;top:107px;width:61px"><svg width="11" height="11" viewBox="0 0 11 11"><path d="M.500 1h10L6.700 5.500v5L4.300 9V5.500z" fill="#c2c3c5"/></svg><i class="dd"></i></div>
<div class="abs" style="left:296px;top:61px;width:1px;height:70px;background:#f0f0f0"></div>
<div class="abs mh" style="left:304.5px;top:76px">Predmet</div>
<div class="abs fb" style="left:305px;top:107px;width:121px"><svg width="11" height="11" viewBox="0 0 11 11"><path d="M.500 1h10L6.700 5.500v5L4.300 9V5.500z" fill="#c2c3c5"/></svg><i class="dd"></i></div>
<div class="abs" style="left:438px;top:61px;width:1px;height:70px;background:#f0f0f0"></div>
<div class="abs mh" style="left:447.5px;top:76px">Súv. predmety</div>
<div class="abs" style="left:550px;top:61px;width:1px;height:70px;background:#f0f0f0"></div>
<div class="abs mh" style="left:558.5px;top:76px">Predseda</div>
<div class="abs fb" style="left:559px;top:107px;width:91px"><svg width="11" height="11" viewBox="0 0 11 11"><path d="M.500 1h10L6.700 5.500v5L4.300 9V5.500z" fill="#c2c3c5"/></svg><i class="dd"></i></div>
<div class="abs" style="left:662px;top:61px;width:1px;height:70px;background:#f0f0f0"></div>
<div class="abs mh" style="left:671.5px;top:76px">Skúšajúci</div>
<div class="abs" style="left:809px;top:61px;width:1px;height:70px;background:#f0f0f0"></div>
<div class="abs mh" style="left:817.5px;top:76px">Učebňa</div>
<div class="abs fb" style="left:818px;top:107px;width:141px"><svg width="11" height="11" viewBox="0 0 11 11"><path d="M.500 1h10L6.700 5.500v5L4.300 9V5.500z" fill="#c2c3c5"/></svg><i class="dd"></i></div>
<div class="abs" style="left:971px;top:61px;width:1px;height:70px;background:#f0f0f0"></div>
<div class="abs mh" style="left:979.5px;top:76px">Menovací dekrét</div>
<div class="abs fb" style="left:980px;top:107px;width:141px"><svg width="11" height="11" viewBox="0 0 11 11"><path d="M.500 1h10L6.700 5.500v5L4.300 9V5.500z" fill="#c2c3c5"/></svg><i class="dd"></i></div>
<div class="abs" style="left:1133px;top:61px;width:1px;height:70px;background:#f0f0f0"></div>
<div class="abs mh" style="left:1141.5px;top:76px">Počet žiakov</div>
<i class="abs" style="left:72px;top:77px;border:4px solid transparent;border-bottom:7px solid #111;border-top:0"></i>
<div class="abs" style="left:11px;top:132px;width:1224px;height:330px;overflow:hidden">
<div class="mr" style="top:0px;height:41px;background:#f5f5f5">
<div class="mc " style="left:0px;width:71px;padding-left:7px"><span>AJ 1</span></div>
<div class="mc " style="left:71px;width:132px;padding-left:6.5px"><span>Anglicka komisia 1</span></div>
<div class="mc ctr" style="left:203px;width:82px;"><span>1</span></div>
<div class="mc " style="left:285px;width:142px;padding-left:6.5px"><span>Anglický jazyk (ANJ)</span></div>
<div class="mc " style="left:427px;width:112px;"><span></span></div>
<div class="mc " style="left:539px;width:112px;padding-left:6.5px"><span>Aneta Belová</span></div>
<div class="mc " style="left:651px;width:147px;padding-left:6.5px"><span>Peter Németh<br>Teo Kováč</span></div>
<div class="mc " style="left:798px;width:162px;padding-left:6.5px"><span>Akákoľvek učebňa</span></div>
<div class="mc" style="left:960px;width:162px"><svg class="pdf" width="13" height="16" viewBox="0 0 13 16"><path d="M2 .600h6.500l3.900 3.900V14a1.400 1.400 0 0 1-1.400 1.400H2A1.400 1.400 0 0 1 .600 14V2A1.400 1.400 0 0 1 2 .600z" fill="#fff" stroke="#f4b4af" stroke-width="1.200"/><path d="M8.300 .600V3.300a1.400 1.400 0 0 0 1.400 1.400h2.700" fill="none" stroke="#f4b4af" stroke-width="1.100"/><path d="M3.300 12.300c1.300-1.200 2.500-3.200 2.700-5.200.1-.7-.7-.7-.6 0 .3 1.900 1.700 3.200 3.700 3.700.7.200.7-.600 0-.600-1.900 0-4.100.8-5.800 2.100z" fill="none" stroke="#e5493f" stroke-width=".9"/></svg><svg class="pen" width="10.500" height="10.500" viewBox="0 0 10 10"><path d="M.300 9.700l.6-3.100L6.400 1.100a1 1 0 0 1 1.400 0l1.100 1.100a1 1 0 0 1 0 1.400L3.400 9.100z" fill="#1b8bea"/></svg><a>upraviť dekrét</a></div>
<div class="mc ctr" style="left:1122px;width:102px;"><span>1</span></div>
</div>
<div class="mr" style="top:41px;height:41px;background:#fff">
<div class="mc " style="left:0px;width:71px;padding-left:7px"><span>AJ 1.O</span></div>
<div class="mc " style="left:71px;width:132px;padding-left:6.5px"><span>Anglicka komisia 1</span></div>
<div class="mc ctr" style="left:203px;width:82px;"><span>1</span></div>
<div class="mc " style="left:285px;width:142px;padding-left:6.5px"><span>Anglický jazyk (ANJ)</span></div>
<div class="mc " style="left:427px;width:112px;"><span></span></div>
<div class="mc " style="left:539px;width:112px;padding-left:6.5px"><span>Aneta Belová</span></div>
<div class="mc " style="left:651px;width:147px;padding-left:6.5px"><span>Peter Németh<br>Teo Kováč</span></div>
<div class="mc " style="left:798px;width:162px;padding-left:6.5px"><span>Akákoľvek učebňa</span></div>
<div class="mc" style="left:960px;width:162px"><svg class="pdf" width="13" height="16" viewBox="0 0 13 16"><path d="M2 .600h6.500l3.900 3.900V14a1.400 1.400 0 0 1-1.400 1.400H2A1.400 1.400 0 0 1 .600 14V2A1.400 1.400 0 0 1 2 .600z" fill="#fff" stroke="#f4b4af" stroke-width="1.200"/><path d="M8.300 .600V3.300a1.400 1.400 0 0 0 1.400 1.400h2.700" fill="none" stroke="#f4b4af" stroke-width="1.100"/><path d="M3.300 12.300c1.300-1.200 2.500-3.200 2.700-5.200.1-.7-.7-.7-.6 0 .3 1.900 1.700 3.200 3.700 3.700.7.200.7-.600 0-.600-1.900 0-4.100.8-5.800 2.100z" fill="none" stroke="#e5493f" stroke-width=".9"/></svg><svg class="pen" width="10.500" height="10.500" viewBox="0 0 10 10"><path d="M.300 9.700l.6-3.100L6.400 1.100a1 1 0 0 1 1.400 0l1.100 1.100a1 1 0 0 1 0 1.400L3.400 9.100z" fill="#1b8bea"/></svg><a>upraviť dekrét</a></div>
<div class="mc ctr" style="left:1122px;width:102px;"><span>7</span></div>
</div>
<div class="mr" style="top:82px;height:41px;background:#f5f5f5">
<div class="mc " style="left:0px;width:71px;padding-left:7px"><span>AJ 2</span></div>
<div class="mc " style="left:71px;width:132px;padding-left:6.5px"><span>Anglická komisia 2</span></div>
<div class="mc ctr" style="left:203px;width:82px;"><span>1</span></div>
<div class="mc " style="left:285px;width:142px;padding-left:6.5px"><span>Anglický jazyk (ANJ)</span></div>
<div class="mc " style="left:427px;width:112px;"><span></span></div>
<div class="mc " style="left:539px;width:112px;padding-left:6.5px"><span>Adam Andraši</span></div>
<div class="mc " style="left:651px;width:147px;padding-left:6.5px"><span>Uršula Bognárová<br>Nela Tothová</span></div>
<div class="mc " style="left:798px;width:162px;padding-left:6.5px"><span>Akákoľvek učebňa</span></div>
<div class="mc" style="left:960px;width:162px"><svg class="pdf" width="13" height="16" viewBox="0 0 13 16"><path d="M2 .600h6.500l3.900 3.900V14a1.400 1.400 0 0 1-1.400 1.400H2A1.400 1.400 0 0 1 .600 14V2A1.400 1.400 0 0 1 2 .600z" fill="#fff" stroke="#f4b4af" stroke-width="1.200"/><path d="M8.300 .600V3.300a1.400 1.400 0 0 0 1.400 1.400h2.700" fill="none" stroke="#f4b4af" stroke-width="1.100"/><path d="M3.300 12.300c1.300-1.200 2.500-3.200 2.700-5.200.1-.7-.7-.7-.6 0 .3 1.900 1.700 3.200 3.700 3.700.7.200.7-.600 0-.600-1.900 0-4.100.8-5.800 2.100z" fill="none" stroke="#e5493f" stroke-width=".9"/></svg><svg class="pen" width="10.500" height="10.500" viewBox="0 0 10 10"><path d="M.300 9.700l.6-3.100L6.400 1.100a1 1 0 0 1 1.400 0l1.100 1.100a1 1 0 0 1 0 1.400L3.400 9.100z" fill="#1b8bea"/></svg><a>upraviť dekrét</a></div>
<div class="mc ctr" style="left:1122px;width:102px;"><span>3</span></div>
</div>
<div class="mr" style="top:123px;height:41px;background:#fff">
<div class="mc " style="left:0px;width:71px;padding-left:7px"><span>AJ 3</span></div>
<div class="mc " style="left:71px;width:132px;padding-left:6.5px"><span>Anglicka komisia 3</span></div>
<div class="mc ctr" style="left:203px;width:82px;"><span>1</span></div>
<div class="mc " style="left:285px;width:142px;padding-left:6.5px"><span>Anglický jazyk (ANJ)</span></div>
<div class="mc " style="left:427px;width:112px;"><span></span></div>
<div class="mc " style="left:539px;width:112px;padding-left:6.5px"><span>Mgr. Adela<br>English</span></div>
<div class="mc " style="left:651px;width:147px;padding-left:6.5px"><span>Tomáš Veselý<br>Peter Németh</span></div>
<div class="mc " style="left:798px;width:162px;padding-left:6.5px"><span>Akákoľvek učebňa</span></div>
<div class="mc" style="left:960px;width:162px"><svg class="pdf" width="13" height="16" viewBox="0 0 13 16"><path d="M2 .600h6.500l3.900 3.900V14a1.400 1.400 0 0 1-1.400 1.400H2A1.400 1.400 0 0 1 .600 14V2A1.400 1.400 0 0 1 2 .600z" fill="#fff" stroke="#f4b4af" stroke-width="1.200"/><path d="M8.300 .600V3.300a1.400 1.400 0 0 0 1.400 1.400h2.700" fill="none" stroke="#f4b4af" stroke-width="1.100"/><path d="M3.300 12.300c1.300-1.200 2.500-3.200 2.700-5.200.1-.7-.7-.7-.6 0 .3 1.900 1.700 3.200 3.700 3.700.7.200.7-.600 0-.600-1.900 0-4.100.8-5.800 2.100z" fill="none" stroke="#e5493f" stroke-width=".9"/></svg><svg class="pen" width="10.500" height="10.500" viewBox="0 0 10 10"><path d="M.300 9.700l.6-3.100L6.400 1.100a1 1 0 0 1 1.400 0l1.100 1.100a1 1 0 0 1 0 1.400L3.400 9.100z" fill="#1b8bea"/></svg><a>upraviť dekrét</a></div>
<div class="mc ctr" style="left:1122px;width:102px;"><span>8</span></div>
</div>
<div class="mr" style="top:164px;height:41px;background:#f5f5f5">
<div class="mc " style="left:0px;width:71px;padding-left:7px"><span>AJ 3</span></div>
<div class="mc " style="left:71px;width:132px;padding-left:6.5px"><span>Anglická komisia 3.2</span></div>
<div class="mc ctr" style="left:203px;width:82px;"><span>1</span></div>
<div class="mc " style="left:285px;width:142px;padding-left:6.5px"><span>Anglický jazyk (ANJ)</span></div>
<div class="mc " style="left:427px;width:112px;"><span></span></div>
<div class="mc " style="left:539px;width:112px;padding-left:6.5px"><span>Mgr. Adela<br>English</span></div>
<div class="mc " style="left:651px;width:147px;padding-left:6.5px"><span>Tomáš Veselý<br>Peter Németh</span></div>
<div class="mc " style="left:798px;width:162px;padding-left:6.5px"><span>Akákoľvek učebňa</span></div>
<div class="mc" style="left:960px;width:162px"><svg class="pdf" width="13" height="16" viewBox="0 0 13 16"><path d="M2 .600h6.500l3.900 3.900V14a1.400 1.400 0 0 1-1.400 1.400H2A1.400 1.400 0 0 1 .600 14V2A1.400 1.400 0 0 1 2 .600z" fill="#fff" stroke="#f4b4af" stroke-width="1.200"/><path d="M8.300 .600V3.300a1.400 1.400 0 0 0 1.400 1.400h2.700" fill="none" stroke="#f4b4af" stroke-width="1.100"/><path d="M3.300 12.300c1.300-1.200 2.500-3.200 2.700-5.200.1-.7-.7-.7-.6 0 .3 1.900 1.700 3.200 3.700 3.700.7.200.7-.600 0-.600-1.900 0-4.100.8-5.800 2.100z" fill="none" stroke="#e5493f" stroke-width=".9"/></svg><svg class="pen" width="10.500" height="10.500" viewBox="0 0 10 10"><path d="M.300 9.700l.6-3.100L6.400 1.100a1 1 0 0 1 1.400 0l1.100 1.100a1 1 0 0 1 0 1.400L3.400 9.100z" fill="#1b8bea"/></svg><a>upraviť dekrét</a></div>
<div class="mc ctr" style="left:1122px;width:102px;"><span>2</span></div>
</div>
<div class="mr" style="top:205px;height:29px;background:#fff">
<div class="mc " style="left:0px;width:71px;padding-left:7px"><span>AJ 4</span></div>
<div class="mc " style="left:71px;width:132px;padding-left:6.5px"><span>Anglická komisia 4</span></div>
<div class="mc ctr" style="left:203px;width:82px;"><span>1</span></div>
<div class="mc " style="left:285px;width:142px;padding-left:6.5px"><span>Anglický jazyk (ANJ)</span></div>
<div class="mc " style="left:427px;width:112px;"><span></span></div>
<div class="mc " style="left:539px;width:112px;padding-left:6.5px"><span>Mgr. Jan John</span></div>
<div class="mc " style="left:651px;width:147px;padding-left:6.5px"><span>Peter Németh</span></div>
<div class="mc " style="left:798px;width:162px;padding-left:6.5px"><span>Akákoľvek učebňa</span></div>
<div class="mc" style="left:960px;width:162px"><svg class="pdf" width="13" height="16" viewBox="0 0 13 16"><path d="M2 .600h6.500l3.900 3.900V14a1.400 1.400 0 0 1-1.400 1.400H2A1.400 1.400 0 0 1 .600 14V2A1.400 1.400 0 0 1 2 .600z" fill="#fff" stroke="#f4b4af" stroke-width="1.200"/><path d="M8.300 .600V3.300a1.400 1.400 0 0 0 1.400 1.400h2.700" fill="none" stroke="#f4b4af" stroke-width="1.100"/><path d="M3.300 12.300c1.300-1.200 2.500-3.200 2.700-5.200.1-.7-.7-.7-.6 0 .3 1.900 1.700 3.200 3.700 3.700.7.200.7-.600 0-.600-1.900 0-4.100.8-5.800 2.100z" fill="none" stroke="#e5493f" stroke-width=".9"/></svg><svg class="pen" width="10.500" height="10.500" viewBox="0 0 10 10"><path d="M.300 9.700l.6-3.100L6.400 1.100a1 1 0 0 1 1.400 0l1.100 1.100a1 1 0 0 1 0 1.400L3.400 9.100z" fill="#1b8bea"/></svg><a>upraviť dekrét</a></div>
<div class="mc ctr" style="left:1122px;width:102px;"><span>0</span></div>
</div>
<div class="mr" style="top:234px;height:41px;background:#f5f5f5">
<div class="mc " style="left:0px;width:71px;padding-left:7px"><span>AJ 5</span></div>
<div class="mc " style="left:71px;width:132px;padding-left:6.5px"><span>Anglicka komisia 5</span></div>
<div class="mc ctr" style="left:203px;width:82px;"><span>1</span></div>
<div class="mc " style="left:285px;width:142px;padding-left:6.5px"><span>Anglický jazyk (ANJ)</span></div>
<div class="mc " style="left:427px;width:112px;"><span></span></div>
<div class="mc " style="left:539px;width:112px;padding-left:6.5px"><span>Mgr. Adela<br>English</span></div>
<div class="mc " style="left:651px;width:147px;padding-left:6.5px"><span>Tomáš Veselý<br>Peter Németh</span></div>
<div class="mc " style="left:798px;width:162px;padding-left:6.5px"><span>Akákoľvek učebňa</span></div>
<div class="mc" style="left:960px;width:162px"><svg class="pdf" width="13" height="16" viewBox="0 0 13 16"><path d="M2 .600h6.500l3.900 3.900V14a1.400 1.400 0 0 1-1.400 1.400H2A1.400 1.400 0 0 1 .600 14V2A1.400 1.400 0 0 1 2 .600z" fill="#fff" stroke="#f4b4af" stroke-width="1.200"/><path d="M8.300 .600V3.300a1.400 1.400 0 0 0 1.400 1.400h2.700" fill="none" stroke="#f4b4af" stroke-width="1.100"/><path d="M3.300 12.300c1.300-1.200 2.500-3.200 2.700-5.200.1-.7-.7-.7-.6 0 .3 1.900 1.700 3.200 3.700 3.700.7.200.7-.600 0-.600-1.900 0-4.100.8-5.800 2.100z" fill="none" stroke="#e5493f" stroke-width=".9"/></svg><svg class="pen" width="10.500" height="10.500" viewBox="0 0 10 10"><path d="M.300 9.700l.6-3.100L6.400 1.100a1 1 0 0 1 1.400 0l1.100 1.100a1 1 0 0 1 0 1.400L3.400 9.100z" fill="#1b8bea"/></svg><a>upraviť dekrét</a></div>
<div class="mc ctr" style="left:1122px;width:102px;"><span>5</span></div>
</div>
<div class="mr" style="top:275px;height:69px;background:#fff">
<div class="mc " style="left:0px;width:71px;padding-left:7px"><span>ANJ</span></div>
<div class="mc " style="left:71px;width:132px;padding-left:6.5px"><span>Anglický jazyk</span></div>
<div class="mc ctr" style="left:203px;width:82px;"><span>1</span></div>
<div class="mc " style="left:285px;width:142px;padding-left:6.5px"><span>Anglický jazyk (ANJ)</span></div>
<div class="mc " style="left:427px;width:112px;"><span></span></div>
<div class="mc " style="left:539px;width:112px;padding-left:6.5px"><span>John Styne</span></div>
<div class="mc " style="left:651px;width:147px;padding-left:6.5px"><span>Peter Németh<br>PhDr.Mária Čarovná<br>PhD.<br>Vlado Externý</span></div>
<div class="mc " style="left:798px;width:162px;padding-left:6.5px"><span>Akákoľvek učebňa</span></div>
<div class="mc" style="left:960px;width:162px"><svg class="pdf" width="13" height="16" viewBox="0 0 13 16"><path d="M2 .600h6.500l3.900 3.900V14a1.400 1.400 0 0 1-1.400 1.400H2A1.400 1.400 0 0 1 .600 14V2A1.400 1.400 0 0 1 2 .600z" fill="#fff" stroke="#f4b4af" stroke-width="1.200"/><path d="M8.300 .600V3.300a1.400 1.400 0 0 0 1.400 1.400h2.700" fill="none" stroke="#f4b4af" stroke-width="1.100"/><path d="M3.300 12.300c1.300-1.200 2.500-3.200 2.700-5.200.1-.7-.7-.7-.6 0 .3 1.900 1.700 3.200 3.700 3.700.7.200.7-.600 0-.600-1.900 0-4.100.8-5.800 2.100z" fill="none" stroke="#e5493f" stroke-width=".9"/></svg><svg class="pen" width="10.500" height="10.500" viewBox="0 0 10 10"><path d="M.300 9.700l.6-3.100L6.400 1.100a1 1 0 0 1 1.400 0l1.100 1.100a1 1 0 0 1 0 1.400L3.400 9.100z" fill="#1b8bea"/></svg><a>upraviť dekrét</a></div>
<div class="mc ctr" style="left:1122px;width:102px;"><span>2</span></div>
</div>
<div class="abs" style="left:71px;top:0;width:1px;height:330px;background:#dcdcdc"></div>
<div class="abs" style="left:203px;top:0;width:1px;height:330px;background:#dcdcdc"></div>
<div class="abs" style="left:285px;top:0;width:1px;height:330px;background:#dcdcdc"></div>
<div class="abs" style="left:427px;top:0;width:1px;height:330px;background:#dcdcdc"></div>
<div class="abs" style="left:539px;top:0;width:1px;height:330px;background:#dcdcdc"></div>
<div class="abs" style="left:651px;top:0;width:1px;height:330px;background:#dcdcdc"></div>
<div class="abs" style="left:798px;top:0;width:1px;height:330px;background:#dcdcdc"></div>
<div class="abs" style="left:960px;top:0;width:1px;height:330px;background:#dcdcdc"></div>
<div class="abs" style="left:1122px;top:0;width:1px;height:330px;background:#dcdcdc"></div>
</div>
<div class="abs" style="left:11px;top:462px;width:1241px;height:1px;background:#93a4b8"></div>
<div class="abs" style="left:1235px;top:132px;width:17px;height:330px;background:#f1f1f1"></div>
<div class="abs" style="left:1237px;top:149px;width:12.500px;height:110px;background:#c1c1c1"></div>
<i class="abs" style="left:1239.400px;top:139px;border:4px solid transparent;border-bottom:4px solid #a3a3a3;border-top:0"></i>
<i class="abs" style="left:1239.400px;top:451px;border:4px solid transparent;border-top:4px solid #505050;border-bottom:0"></i>
<div class="abs" style="left:0;top:475px;width:1264px;height:1px;background:#e2e2e2"></div>
<div class="abs btn" style="left:870px;top:486px;width:191px;background:#3f84c1;color:#fff;padding-left:34px;text-align:left">Skopírovať z minulého roku<svg class="abs" style="left:13px;top:8px" width="14" height="15" viewBox="0 0 14 15"><path d="M4.500 .500h5l3.500 3.500v7.500h-8.500z" fill="#fff"/><path d="M9.500 .500v3.500h3.500" fill="none" stroke="#3f84c1" stroke-width=".9"/><path d="M.500 3.500h3.300v8.700h6v2.300H.500z" fill="#fff"/></svg></div>
<div class="abs btn" style="left:1097px;top:486px;width:84px;background:#4fa755;color:#fff">Pridať novú</div>
<div class="abs btn" style="left:1187px;top:486px;width:64px;background:#f6f6f9;color:#222;border:1px solid #dcdce0">Zatvoriť</div>
</div>
<div class="abs" style="left:108px;top:180px;width:1274px;height:539px;border:5px solid #ed1c24;z-index:12;pointer-events:none"></div>
<svg class="abs" style="left:1005px;top:312px;z-index:13" width="90" height="56" viewBox="1005 312 90 56"><path d="M1010 326.600H1047V317L1090.300 339.600 1047 362.400V352.900H1010z" fill="#ed1c24"/><path d="M1014.500 331.600H1051.700V324L1082.200 339.600 1051.700 355.900V347.900H1014.500z" fill="#fff200"/></svg>
<!--MODAL-END-->
</div></div>
</body>
</html>
